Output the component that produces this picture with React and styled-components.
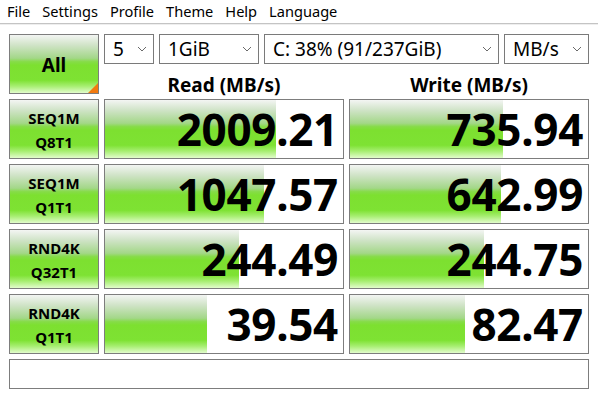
import styled, { createGlobalStyle } from "styled-components";

const GlobalStyle = createGlobalStyle`
  body {
    margin: 0;
    background: #ffffff;
    font-family: "Noto Sans", "Open Sans", sans-serif;
  }
`;

const green = `linear-gradient(
  to bottom,
  #f3f5f3 0%,
  #cfe3c6 18%,
  #a3d788 40%,
  #86dc48 46%,
  #7de030 52%,
  #7ee233 78%,
  #a6ee70 88%,
  #e2fccc 100%
)`;

const Window = styled.div`
  width: 598px;
  height: 398px;
  background: #ffffff;
  overflow: hidden;
`;

const MenuBar = styled.div`
  display: flex;
  gap: 12px;
  height: 23px;
  padding-left: 7px;
  align-items: center;
  font-size: 14.6px;
  color: #000;
  border-bottom: 1px solid #c4c4c4;
  box-shadow: 0 1px 0 #eeeeee;
`;

const MenuItem = styled.span`
  line-height: 23px;
`;

const Board = styled.div`
  display: grid;
  grid-template-columns: 90px 240px 240px;
  grid-auto-rows: 60px;
  column-gap: 5px;
  row-gap: 5px;
  padding: 10px 0 0 9px;
`;

const GreenCell = styled.div`
  box-sizing: border-box;
  border: 1px solid #7d7d7d;
  background: ${green};
  display: flex;
  flex-direction: column;
  align-items: center;
  justify-content: center;
  font-weight: 700;
  color: #000;
`;

const AllButton = styled(GreenCell)`
  position: relative;
  font-size: 19px;
  padding-top: 2px;

  &::after {
    content: "";
    position: absolute;
    right: 0;
    bottom: 0;
    width: 0;
    height: 0;
    border-style: solid;
    border-width: 0 0 10px 10px;
    border-color: transparent transparent #f27a10 transparent;
  }
`;

const TestLabel = styled(GreenCell)`
  font-size: 15px;
  line-height: 24px;
  padding-top: 1px;
`;

const Controls = styled.div`
  grid-column: 2 / 4;
  display: grid;
  grid-template-rows: 30px 30px;
`;

const SelectRow = styled.div`
  display: flex;
  gap: 5px;
`;

const Select = styled.div`
  box-sizing: border-box;
  width: ${(p) => p.$w}px;
  height: 30px;
  border: 1px solid #7a7a7a;
  display: flex;
  align-items: center;
  justify-content: space-between;
  padding: 0 6px 0 8px;
  font-size: 19px;
  color: #000;
  background: #fff;
`;

const Headers = styled.div`
  display: grid;
  grid-template-columns: 240px 240px;
  column-gap: 5px;
`;

const Header = styled.div`
  text-align: center;
  font-size: 19px;
  font-weight: 700;
  line-height: 26px;
  padding-top: 8px;
`;

const Result = styled.div`
  position: relative;
  box-sizing: border-box;
  border: 1px solid #7d7d7d;
  background: #fff;
  display: flex;
  align-items: center;
  justify-content: flex-end;
  padding-right: 5px;
  overflow: hidden;
`;

const Bar = styled.div`
  position: absolute;
  left: 0;
  top: 0;
  bottom: 0;
  background: ${green};
`;

const Value = styled.span`
  position: relative;
  font-size: 44px;
  font-weight: 700;
  line-height: 1;
  letter-spacing: -0.3px;
  color: #000;
`;

const Status = styled.div`
  grid-column: 1 / 4;
  box-sizing: border-box;
  height: 30px;
  border: 1px solid #7d7d7d;
  background: #fff;
`;

function Chevron() {
  return (
    <svg width="10" height="6" viewBox="0 0 10 6">
      <path d="M1 1 L5 5 L9 1" fill="none" stroke="#6a6a6a" strokeWidth="1" />
    </svg>
  );
}

const menus = ["File", "Settings", "Profile", "Theme", "Help", "Language"];

const selects = [
  { w: 50, text: "5" },
  { w: 100, text: "1GiB" },
  { w: 235, text: "C: 38% (91/237GiB)" },
  { w: 85, text: "MB/s" },
];

const rows = [
  { a: "SEQ1M", b: "Q8T1", read: "2009.21", rf: 171, write: "735.94", wf: 153 },
  { a: "SEQ1M", b: "Q1T1", read: "1047.57", rf: 159, write: "642.99", wf: 151 },
  { a: "RND4K", b: "Q32T1", read: "244.49", rf: 134, write: "244.75", wf: 134 },
  { a: "RND4K", b: "Q1T1", read: "39.54", rf: 102, write: "82.47", wf: 115 },
];

export default function App() {
  return (
    <Window>
      <GlobalStyle />
      <MenuBar>
        {menus.map((m) => (
          <MenuItem key={m}>{m}</MenuItem>
        ))}
      </MenuBar>
      <Board>
        <AllButton>All</AllButton>
        <Controls>
          <SelectRow>
            {selects.map((s) => (
              <Select key={s.text} $w={s.w}>
                <span>{s.text}</span>
                <Chevron />
              </Select>
            ))}
          </SelectRow>
          <Headers>
            <Header>Read (MB/s)</Header>
            <Header>Write (MB/s)</Header>
          </Headers>
        </Controls>
        {rows.map((r) => (
          <>
            <TestLabel key={r.a + r.b}>
              <span>{r.a}</span>
              <span>{r.b}</span>
            </TestLabel>
            <Result key={r.read}>
              <Bar style={{ width: r.rf }} />
              <Value>{r.read}</Value>
            </Result>
            <Result key={r.write}>
              <Bar style={{ width: r.wf }} />
              <Value>{r.write}</Value>
            </Result>
          </>
        ))}
        <Status />
      </Board>
    </Window>
  );
}
